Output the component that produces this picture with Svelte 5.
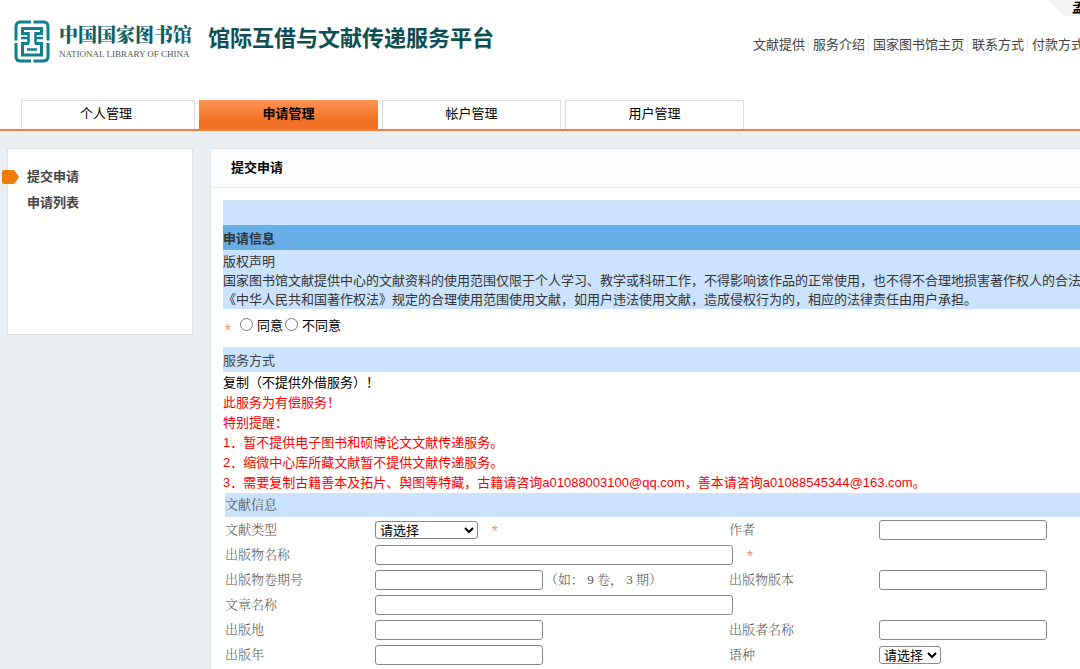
<script>
	const navLinks = ["文献提供", "服务介绍", "国家图书馆主页", "联系方式", "付款方式"]
	const tabs = ["个人管理", "申请管理", "帐户管理", "用户管理"]
	const activeTab = "申请管理"
	const menu = ["提交申请", "申请列表"]
	const activeMenu = "提交申请"

	const notices = [
		"此服务为有偿服务！",
		"特别提醒：",
		"1．暂不提供电子图书和硕博论文文献传递服务。",
		"2．缩微中心库所藏文献暂不提供文献传递服务。",
		"3．需要复制古籍善本及拓片、舆图等特藏，古籍请咨询a01088003100@qq.com，善本请咨询a01088545344@163.com。",
	]

	const rows = [
		[
			{ id: "docType", label: "文献类型", type: "select", size: "medium", required: true },
			{ id: "author", label: "作者" },
		],
		[{ id: "pubName", label: "出版物名称", size: "wide", required: true }],
		[
			{ id: "volume", label: "出版物卷期号", hint: "（如： 9 卷， 3 期）" },
			{ id: "edition", label: "出版物版本" },
		],
		[{ id: "article", label: "文章名称", size: "wide" }],
		[
			{ id: "place", label: "出版地" },
			{ id: "publisher", label: "出版者名称" },
		],
		[
			{ id: "year", label: "出版年" },
			{ id: "language", label: "语种", type: "select", size: "small" },
		],
	]

	let agree = $state("")
</script>

<div class="page">
	<header class="header">
		<a class="logo" href="#home">
			<svg class="logo-mark" viewBox="0 0 36 43" aria-hidden="true">
				<g fill="none" stroke="#12808c" stroke-width="3">
					<path d="M17 2H6.500Q2 2 2 6.500V20.500" />
					<path d="M19.500 2H29.500Q34 2 34 6.500V20.500" />
					<path d="M2 23V36.500Q2 41 6.500 41H17" />
					<path d="M34 23V36.500Q34 41 29.500 41H19.500" />
					<path d="M14.500 13.500H8.500V8.500H27.500V13.500H21.500" />
					<path d="M14.500 12V23.500M21.500 12V23.500" stroke-width="2.500" />
					<path d="M7 18H14M22 18H29" stroke-width="2.500" />
					<path d="M15 23.500H8.500V35H27.500V23.500H21" />
					<path d="M13 29.500H23" stroke-width="2.500" />
				</g>
			</svg>
			<span class="logo-text">
				<span class="logo-cn">中国国家图书馆</span>
				<span class="logo-en">NATIONAL LIBRARY OF CHINA</span>
			</span>
		</a>
		<h1 class="platform">馆际互借与文献传递服务平台</h1>
		<div class="header-right">
			<div class="user"><b>孟</b></div>
			<nav class="top-nav">
				{#each navLinks as link}
					<a href="#nav">{link}</a>
				{/each}
			</nav>
		</div>
	</header>

	<nav class="tabs">
		{#each tabs as tab}
			<a href="#tab" class="tab" class:active={tab === activeTab}>{tab}</a>
		{/each}
	</nav>

	<div class="body">
		<aside class="sidebar">
			{#each menu as item}
				<a href="#menu" class="menu-item">
					{#if item === activeMenu}
						<svg class="marker" viewBox="0 0 17 14" aria-hidden="true">
							<path d="M2 0H11Q12 0 13 1L17 7L13 13Q12 14 11 14H2Q0 14 0 12V2Q0 0 2 0Z" fill="#ee7c05" />
						</svg>
					{/if}
					{item}
				</a>
			{/each}
		</aside>

		<main class="main">
			<h2 class="main-title">提交申请</h2>
			<form class="form">
				<div class="band"></div>
				<h3 class="band band-title">申请信息</h3>
				<div class="copyright">
					<p>版权声明</p>
					<p>国家图书馆文献提供中心的文献资料的使用范围仅限于个人学习、教学或科研工作，不得影响该作品的正常使用，也不得不合理地损害著作权人的合法权益。</p>
					<p>《中华人民共和国著作权法》规定的合理使用范围使用文献，如用户违法使用文献，造成侵权行为的，相应的法律责任由用户承担。</p>
				</div>

				<div class="agree">
					<span class="star">*</span>
					<label><input type="radio" name="agree" value="yes" bind:group={agree} />同意</label>
					<label><input type="radio" name="agree" value="no" bind:group={agree} />不同意</label>
				</div>

				<h3 class="band">服务方式</h3>
				<div class="service">
					<p>复制（不提供外借服务）！</p>
					{#each notices as notice}
						<p class="notice">{notice}</p>
					{/each}
				</div>

				<div class="document">
					<h3 class="band">文献信息</h3>
					{#each rows as row}
						<div class="row">
							{#each row as field}
								<label for={field.id}>{field.label}</label>
								<div class="field" class:span={field.size === "wide"}>
									{#if field.type === "select"}
										<select id={field.id} class={field.size}>
											<option>请选择</option>
										</select>
									{:else}
										<input id={field.id} type="text" class={field.size} />
									{/if}
									{#if field.hint}
										<span class="hint">{field.hint}</span>
									{/if}
									{#if field.required}
										<span class="star">*</span>
									{/if}
								</div>
							{/each}
						</div>
					{/each}
				</div>
			</form>
		</main>
	</div>
</div>

<style>
	:global(body) {
		margin: 0;
		overflow-x: hidden;
		background: #ebeff2;
	}

	.page {
		min-width: 1240px;
		font-family: "Liberation Sans", "Noto Sans CJK SC", sans-serif;
		font-size: 13px;
		line-height: 20px;
		color: #000;
	}

	a {
		color: inherit;
		text-decoration: none;
	}

	h1,
	h2,
	h3,
	p {
		margin: 0;
		font-size: inherit;
	}

	.header {
		display: flex;
		align-items: flex-start;
		height: 100px;
		padding-left: 14px;
		background: #fff;
	}

	.logo {
		display: flex;
		gap: 9px;
		padding-top: 20px;
	}

	.logo-mark {
		width: 36px;
		height: 43px;
	}

	.logo-text {
		display: flex;
		flex-direction: column;
		width: 149px;
		white-space: nowrap;
	}

	.logo-cn {
		font-family: "Noto Serif CJK SC", "Noto Sans CJK SC", serif;
		font-size: 19px;
		font-weight: 900;
		line-height: 28px;
		color: #0e6068;
	}

	.logo-en {
		font-family: "Liberation Serif", serif;
		font-size: 9px;
		line-height: 12px;
		color: #555;
	}

	.platform {
		padding-top: 24px;
		font-size: 22px;
		font-weight: 700;
		line-height: 30px;
		color: #0d4e55;
		white-space: nowrap;
	}

	.header-right {
		flex: 1;
		display: flex;
		flex-direction: column;
		padding-left: 259px;
	}

	.user {
		align-self: flex-end;
		width: 168px;
		height: 16px;
		padding-left: 24px;
		background: #f4f4f4;
		clip-path: polygon(0 0, 100% 0, 100% 100%, 16px 100%);
		line-height: 16px;
	}

	.top-nav {
		display: flex;
		padding-top: 19px;
		color: #444;
		white-space: nowrap;
	}

	.top-nav a {
		padding-right: 3px;
		margin-right: 4px;
		border-right: 1px solid #e8eeee;
	}

	.top-nav a:last-child {
		border-right: none;
	}

	.tabs {
		display: flex;
		gap: 4px;
		padding-left: 21px;
		background: #fff;
		border-bottom: 2px solid #ee7f41;
	}

	.tab {
		box-sizing: border-box;
		width: 179px;
		height: 29px;
		border: 1px solid #ddd;
		border-bottom: none;
		line-height: 26px;
		text-align: center;
	}

	.tab:first-child {
		width: 174px;
		padding-right: 4px;
	}

	.tab.active {
		border: none;
		background: linear-gradient(#ff9355, #f37226 70%);
		font-weight: 700;
		line-height: 28px;
	}

	.body {
		display: flex;
		align-items: flex-start;
		gap: 17px;
		padding: 17px 0 0 7px;
	}

	.sidebar {
		box-sizing: border-box;
		flex: none;
		width: 186px;
		min-height: 187px;
		padding: 15px 0 0 19px;
		background: #fff;
		border: 1px solid #dfe2e4;
		color: #444;
	}

	.menu-item {
		position: relative;
		display: block;
		line-height: 26px;
		font-weight: 700;
	}

	.marker {
		position: absolute;
		top: 6px;
		left: -25px;
		width: 17px;
		height: 14px;
	}

	.main {
		flex: 1;
		min-width: 0;
		background: #fff;
		border: 1px solid #e2e6e8;
	}

	.main-title {
		padding-left: 20px;
		background: #fcfcfc;
		border-bottom: 1px solid #ececec;
		line-height: 38px;
	}

	.form {
		padding: 12px 0 20px 12px;
	}

	.band {
		height: 25px;
		background: #cbe3fe;
		color: #444;
		font-weight: 400;
		line-height: 28px;
	}

	.band-title {
		background: #68aee6;
		color: #333;
		font-weight: 700;
	}

	.copyright {
		padding-top: 2px;
		background: #cbe3fe;
		color: #333;
		line-height: 19px;
		white-space: nowrap;
	}

	.star {
		color: #f0956c;
		font-family: "Liberation Mono", monospace;
		font-size: 16px;
	}

	.agree {
		display: flex;
		gap: 2px;
		height: 38px;
		line-height: 34px;
	}

	.agree .star {
		width: 15px;
		line-height: 46px;
	}

	.agree input {
		width: 13px;
		height: 13px;
		margin: 0 4px 0 0;
		vertical-align: -1px;
	}

	.service {
		padding-top: 1px;
		white-space: nowrap;
	}

	.notice {
		color: #f00;
	}

	.document {
		padding-left: 2px;
		color: #555;
		font-family: "Liberation Serif", "Noto Serif CJK SC", "Noto Sans CJK SC", serif;
	}

	.document .band {
		height: 24px;
		color: #555;
		line-height: 24px;
	}

	.row {
		display: grid;
		grid-template-columns: 150px 354px 150px 1fr;
		align-items: center;
		height: 25px;
		font-weight: 300;
	}

	.field {
		display: flex;
		align-items: center;
		white-space: nowrap;
	}

	.span {
		grid-column: span 3;
	}

	.field .star {
		height: 14px;
		padding-left: 12px;
	}

	.hint {
		padding-left: 2px;
	}

	.row input {
		box-sizing: border-box;
		width: 168px;
		height: 20px;
		border: 1px solid #888;
		border-radius: 3px;
		background: #fff;
	}

	.row input.wide {
		width: 358px;
	}

	select {
		box-sizing: border-box;
		height: 18px;
		padding: 0;
		border: 1px solid #888;
		border-radius: 3px;
		background: #fff;
		color: #000;
		font-family: "Liberation Sans", "Noto Sans CJK SC", sans-serif;
		font-size: 13px;
	}

	.medium {
		width: 103px;
	}

	.small {
		width: 62px;
	}
</style>
